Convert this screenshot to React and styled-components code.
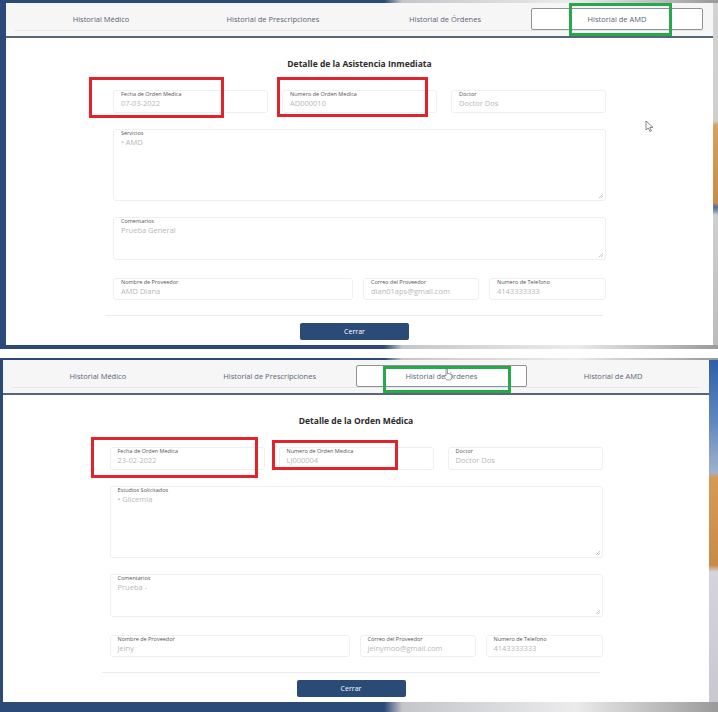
import React from "react";
import styled, { createGlobalStyle } from "styled-components";

const GlobalStyle = createGlobalStyle`
  * { box-sizing: border-box; }
  body {
    margin: 0;
    font-family: "Open Sans", "Liberation Sans", sans-serif;
    background: #fff;
  }
`;

const Stage = styled.div`
  position: relative;
  width: 718px;
  height: 712px;
  overflow: hidden;
  background: #fff;
  display: flex;
  flex-direction: column;
`;

const Frame = styled.div`
  display: flex;
  height: ${(p) => p.$h}px;
  padding: ${(p) => p.$pad};
  background: linear-gradient(
    90deg,
    #2b4a77 0%,
    #2b4a77 53.5%,
    #c4c6ca 56%,
    #ebebec 80%,
    #9a9a9a 100%
  );
`;

const Gap = styled.div`
  height: ${(p) => p.$h}px;
  background: #fff;
`;

const SideStrip = styled.div`
  flex: 1;
  height: 342px;
  background: ${(p) => p.$bg};
`;

const Panel = styled.div`
  width: ${(p) => p.$w}px;
  height: 342px;
  background: #fff;
  display: flex;
  flex-direction: column;
`;

const TabBar = styled.div`
  background: #f6f6f7;
  padding: 5px 10px 5px 9px;
  border-bottom: 2px solid #56677a;
`;

const TabRow = styled.div`
  display: grid;
  grid-template-columns: repeat(4, 1fr);
  border-bottom: 1px solid #e6e6e8;
`;

const Tab = styled.div`
  height: 22px;
  display: flex;
  align-items: center;
  justify-content: center;
  font-size: 7.5px;
  color: #5b6472;
  background: ${(p) => (p.$active ? "#fff" : "transparent")};
  border: 1px solid ${(p) => (p.$active ? "#8d9399" : "transparent")};
  border-radius: 2px;
`;

const Title = styled.h2`
  margin: 20px 0 20px;
  line-height: 12px;
  text-align: center;
  font-size: 8.5px;
  font-weight: 700;
  color: #2a2a2a;
`;

const Content = styled.div`
  width: 493px;
  margin: 0 auto;
  display: flex;
  flex-direction: column;
`;

const Row = styled.div`
  display: grid;
  grid-template-columns: ${(p) => p.$cols};
  column-gap: ${(p) => p.$gap}px;
  margin-bottom: ${(p) => p.$mb}px;
`;

const Box = styled.div`
  position: relative;
  height: ${(p) => p.$h}px;
  border: 1px solid #efefef;
  border-radius: 3px;
  padding: 0 7px;
  margin-bottom: ${(p) => p.$mb || 0}px;
`;

const Label = styled.div`
  font-size: 5.5px;
  line-height: 6px;
  color: #555;
`;

const Value = styled.div`
  margin-top: 1px;
  font-size: 7.5px;
  line-height: 10px;
  color: #b8b8b8;
  white-space: nowrap;
`;

const Grip = styled.svg`
  position: absolute;
  right: 2px;
  bottom: 2px;
  width: 5px;
  height: 5px;
`;

const Divider = styled.div`
  width: 498px;
  height: 1px;
  margin: 0 0 7px -8px;
  background: #ebebeb;
`;

const Footer = styled.div`
  display: flex;
  justify-content: center;
  padding-right: 10px;
`;

const CloseButton = styled.button`
  width: 109px;
  height: 17px;
  border: none;
  border-radius: 2px;
  background: #2a4b76;
  color: #fff;
  font-family: "Open Sans", "Liberation Sans", sans-serif;
  font-size: 7px;
  padding: 0;
`;

const Mark = styled.div`
  position: absolute;
  left: ${(p) => p.$x}px;
  top: ${(p) => p.$y}px;
  width: ${(p) => p.$w}px;
  height: ${(p) => p.$h}px;
  border: 3px solid ${(p) => (p.$green ? "#27a84a" : "#e1232b")};
  pointer-events: none;
`;

const Cursor = styled.svg`
  position: absolute;
  left: ${(p) => p.$x}px;
  top: ${(p) => p.$y}px;
  width: 10px;
  height: 13px;
`;

const tabs = [
  "Historial Médico",
  "Historial de Prescripciones",
  "Historial de Órdenes",
  "Historial de AMD",
];

const ResizeGrip = () => (
  <Grip viewBox="0 0 5 5">
    <path d="M1 5 L5 1 M3 5 L5 3" stroke="#a8a8a8" strokeWidth="0.6" />
  </Grip>
);

const Field = ({ label, value, h = 23, mb, grip }) => (
  <Box $h={h} $mb={mb}>
    <Label>{label}</Label>
    <Value>{value}</Value>
    {grip && <ResizeGrip />}
  </Box>
);

const DetailPanel = ({ width, active, title, data }) => (
  <Panel $w={width}>
    <TabBar>
      <TabRow>
        {tabs.map((t, i) => (
          <Tab key={t} $active={i === active}>
            {t}
          </Tab>
        ))}
      </TabRow>
    </TabBar>
    <Title>{title}</Title>
    <Content>
      <Row $cols="1fr 1fr 1fr" $gap={14} $mb={16}>
        <Field label="Fecha de Orden Medica" value={data.fecha} />
        <Field label="Numero de Orden Medica" value={data.numero} />
        <Field label="Doctor" value="Doctor Dos" />
      </Row>
      <Field label={data.listLabel} value={"• " + data.item} h={72} mb={16} grip />
      <Field label="Comentarios" value={data.comentario} h={43} mb={18} grip />
      <Row $cols="240px 116px 117px" $gap={10} $mb={15}>
        <Field label="Nombre de Proveedor" value={data.proveedor} h={22} />
        <Field label="Correo del Proveedor" value={data.correo} h={22} />
        <Field label="Numero de Telefono" value="4143333333" h={22} />
      </Row>
      <Divider />
      <Footer>
        <CloseButton>Cerrar</CloseButton>
      </Footer>
    </Content>
  </Panel>
);

const amd = {
  fecha: "07-03-2022",
  numero: "AD000010",
  listLabel: "Servicios",
  item: "AMD",
  comentario: "Prueba General",
  proveedor: "AMD Diana",
  correo: "dian01aps@gmail.com",
};

const orden = {
  fecha: "23-02-2022",
  numero: "LJ000004",
  listLabel: "Estudios Solicitados",
  item: "Glicemia",
  comentario: "Prueba -",
  proveedor: "Jeiny",
  correo: "jeinymoo@gmail.com",
};

const topStrip =
  "linear-gradient(180deg, #d2d2d3 0px, #cfcfcf 118px, #d9a062 122px, #c98b47 200px, #4d70a6 204px, #7f93b3 208px, #cfcfd1 212px, #bcbcbe 342px)";
const bottomStrip =
  "linear-gradient(180deg, #2f5fa8 0px, #5f86c0 60px, #9fb1cc 112px, #d69a58 118px, #c88a48 205px, #d5d3dc 212px, #c9c8d0 342px)";

export default function App() {
  return (
    <>
      <GlobalStyle />
      <Stage>
        <Frame $h={349} $pad="3px 0 4px 6px">
          <DetailPanel
            width={707}
            active={3}
            title="Detalle de la Asistencia Inmediata"
            data={amd}
          />
          <SideStrip $bg={topStrip} />
        </Frame>
        <Gap $h={9} />
        <Frame $h={354} $pad="2px 0 10px 3px">
          <DetailPanel
            width={706}
            active={2}
            title="Detalle de la Orden Médica"
            data={orden}
          />
          <SideStrip $bg={bottomStrip} />
        </Frame>

        <Mark $green $x={569} $y={3} $w={103} $h={33} />
        <Mark $x={89} $y={77} $w={135} $h={41} />
        <Mark $x={277} $y={77} $w={151} $h={40} />
        <Mark $green $x={383} $y={366} $w={128} $h={27} />
        <Mark $x={91} $y={437} $w={167} $h={41} />
        <Mark $x={272} $y={440} $w={126} $h={30} />

        <Cursor $x={645} $y={120} viewBox="0 0 10 13">
          <path d="M1 1 L1 10 L3.3 8 L5 11.5 L6.4 10.8 L4.8 7.4 L8 7.4 Z" fill="#fff" stroke="#555" strokeWidth="0.7" />
        </Cursor>
        <Cursor $x={443} $y={368} viewBox="0 0 10 13">
          <path d="M3 1.5 Q3 0.8 3.7 0.8 Q4.4 0.8 4.4 1.5 L4.4 6 L5 5.5 Q6.5 5.4 7 6.2 Q8.6 6.4 8.8 7.5 L8.8 10 Q8.4 12 6.5 12 L4.5 12 Q3.2 12 2.4 10.6 L1.2 8.2 Q1 7.4 1.8 7.3 L3 8 Z" fill="#fff" stroke="#555" strokeWidth="0.6" />
        </Cursor>
      </Stage>
    </>
  );
}
